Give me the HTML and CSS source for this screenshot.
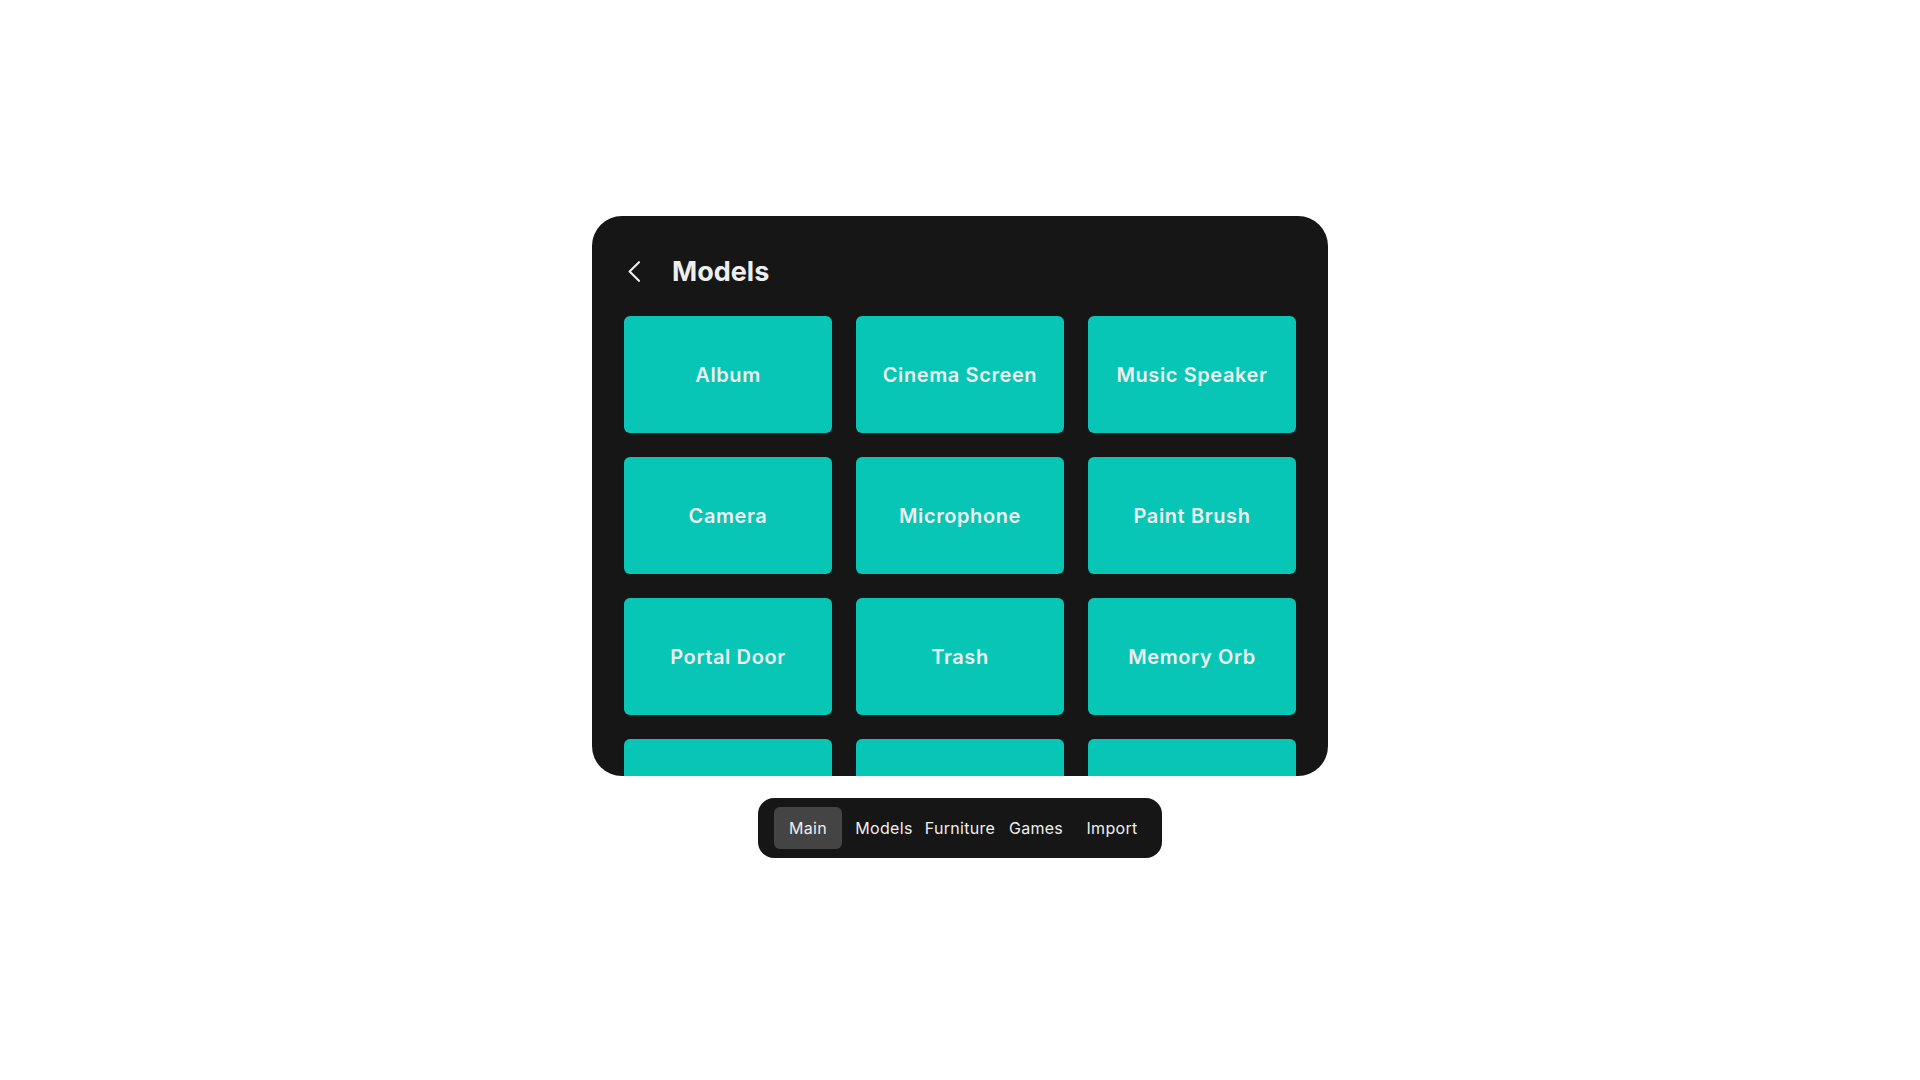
FILE: index.html
```html
<!DOCTYPE html>
<html lang="en">
<head>
<meta charset="utf-8">
<title>Models</title>
<link rel="stylesheet" href="styles.css">
</head>
<body>
<div class="stage">
  <section class="panel">
    <header class="panel-header">
      <button class="back" aria-label="Back">
        <svg width="12" height="21" viewBox="0 0 12 21"><path d="M11 1.2 L1.6 10.5 L11 19.8" fill="none" stroke="#eeeeee" stroke-width="2.1" stroke-linecap="round" stroke-linejoin="round"/></svg>
      </button>
      <h1 class="title">Models</h1>
    </header>
    <div class="grid">
      <div class="card">Album</div>
      <div class="card">Cinema Screen</div>
      <div class="card">Music Speaker</div>
      <div class="card">Camera</div>
      <div class="card">Microphone</div>
      <div class="card">Paint Brush</div>
      <div class="card">Portal Door</div>
      <div class="card">Trash</div>
      <div class="card">Memory Orb</div>
      <div class="card"></div>
      <div class="card"></div>
      <div class="card"></div>
    </div>
  </section>
  <nav class="tabbar">
    <span class="tab active">Main</span>
    <span class="tab">Models</span>
    <span class="tab">Furniture</span>
    <span class="tab">Games</span>
    <span class="tab">Import</span>
  </nav>
</div>
</body>
</html>
```
FILE: styles.css
```css
html, body {
  margin: 0;
  padding: 0;
  background: #ffffff;
  font-family: Inter, "Noto Sans", sans-serif;
}
.stage {
  display: flex;
  flex-direction: column;
  align-items: center;
  padding-top: 216px;
  gap: 22px;
}
.panel {
  width: 736px;
  height: 560px;
  box-sizing: border-box;
  background: #161616;
  border-radius: 30px;
  padding: 32px 32px 0;
  display: flex;
  flex-direction: column;
  overflow: hidden;
}
.panel-header {
  flex: none;
  height: 44px;
  display: flex;
  align-items: center;
  gap: 32px;
  margin-bottom: 24px;
}
.back {
  background: none;
  border: 0;
  padding: 0;
  margin-left: 4px;
  display: flex;
  align-items: center;
  margin-top: 2px;
}
.title {
  margin: 0;
  font-size: 27px;
  font-weight: 700;
  color: #eeeeee;
  margin-top: 2px;
}
.grid {
  flex: 1;
  min-height: 0;
  display: grid;
  grid-template-columns: repeat(3, 208px);
  grid-auto-rows: 117px;
  gap: 24px;
  overflow: hidden;
}
.card {
  background: #08c6b6;
  border-radius: 6px;
  display: flex;
  align-items: center;
  justify-content: center;
  color: #eeeeee;
  font-size: 20px;
  font-weight: 600;
  letter-spacing: 0.6px;
}
.tabbar {
  box-sizing: border-box;
  height: 60px;
  padding: 9px 16px;
  background: #161616;
  border-radius: 16px;
  display: flex;
  gap: 8px;
}
.tab {
  width: 68px;
  flex: none;
  height: 42px;
  display: flex;
  align-items: center;
  justify-content: center;
  color: #eeeeee;
  font-size: 16px;
  font-weight: 400;
  letter-spacing: 0.3px;
  border-radius: 6px;
  white-space: nowrap;
}
.tab.active {
  background: #444444;
}
```
